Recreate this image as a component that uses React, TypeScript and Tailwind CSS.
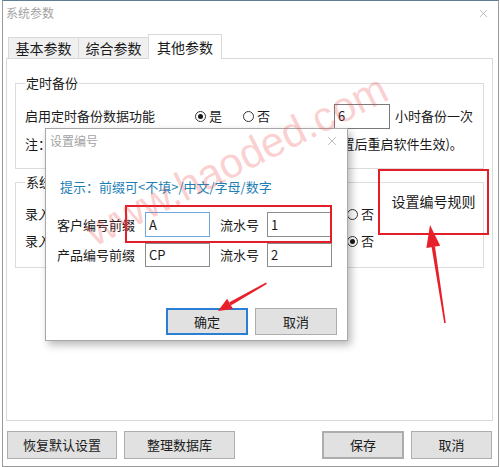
import { X } from "lucide-react";

function Radio({ checked, label }: { checked?: boolean; label: string }) {
  return (
    <span className="flex items-center gap-[3px]">
      <span className="flex h-[11px] w-[11px] items-center justify-center rounded-full border border-[#333] bg-white">
        {checked && <span className="h-[5px] w-[5px] rounded-full bg-[#1a1a1a]" />}
      </span>
      <span>{label}</span>
    </span>
  );
}

function Btn({ label, className = "" }: { label: string; className?: string }) {
  return (
    <div
      className={`flex h-[28px] items-center justify-center border border-[#adadad] bg-[#e1e1e1] text-[13px] ${className}`}
    >
      {label}
    </div>
  );
}

function Tab({ label, active }: { label: string; active?: boolean }) {
  return (
    <div
      className={
        active
          ? "relative z-10 -mb-px -ml-px flex h-[25px] w-[74px] items-center justify-center border border-b-0 border-[#d9d9d9] bg-white text-[14px]"
          : "-ml-px flex h-[21px] w-[71px] items-center justify-center border border-b-0 border-[#d9d9d9] bg-[#f0f0f0] text-[14px] first:ml-0"
      }
    >
      {label}
    </div>
  );
}

export default function App() {
  return (
    <div className="relative h-[467px] w-[500px] overflow-hidden bg-white font-['Noto_Sans_CJK_SC','Noto_Sans',sans-serif] text-[13px] text-[#1a1a1a]">
      <div className="ml-[2px] flex h-[467px] w-[497px] flex-col border border-[#9a9a9a] border-t-[#5d7f94] bg-white">
        {/* title bar */}
        <div className="flex h-[24px] items-center justify-between pl-[3px] pr-[8px]">
          <span className="text-[12px] text-[#a3a3a3]">系统参数</span>
          <X size={13} strokeWidth={1} className="text-[#8a8a8a]" />
        </div>

        {/* tabs */}
        <div className="flex h-[33px] items-end pl-[5px]">
          <Tab label="基本参数" />
          <Tab label="综合参数" />
          <Tab label="其他参数" active />
        </div>

        {/* panel */}
        <div className="relative ml-[3px] h-[363px] w-[487px] border border-[#d9d9d9] bg-white">
          {/* group 1 */}
          <div className="ml-[8px] mt-[24px] h-[86px] w-[469px] border border-[#dcdcdc] pl-[9px]">
            <div className="-mt-[10px] w-fit bg-white px-px leading-[18px]">定时备份</div>
            <div className="mt-[11px] flex h-[26px] items-center">
              <span className="w-[170px]">启用定时备份数据功能</span>
              <Radio checked label="是" />
              <span className="ml-[21px]">
                <Radio label="否" />
              </span>
              <div className="ml-[64px] flex h-[25px] w-[56px] items-center border border-[#7a7a7a] pl-[3px]">6</div>
              <span className="ml-[5px]">小时备份一次</span>
            </div>
            <div className="mt-[5px] flex h-[20px] items-center whitespace-nowrap">
              注：启用后系统将按照设定的时间自动备份数据(修改设置后重启软件生效)。
            </div>
          </div>

          {/* group 2 */}
          <div className="ml-[8px] mt-[13px] h-[86px] w-[469px] border border-[#dcdcdc] pl-[9px]">
            <div className="-mt-[10px] w-fit bg-white px-px leading-[18px]">系统设置</div>
            <div className="mt-[13px] flex h-[20px] items-center">
              <span className="w-[273px]">录入客户资料时编号自动生成</span>
              <Radio checked label="是" />
              <span className="ml-[22px]">
                <Radio label="否" />
              </span>
            </div>
            <div className="mt-[7px] flex h-[20px] items-center">
              <span className="w-[273px]">录入产品资料时编号自动生成</span>
              <Radio label="是" />
              <span className="ml-[22px]">
                <Radio checked label="否" />
              </span>
            </div>
          </div>
        </div>

        {/* bottom buttons */}
        <div className="mt-[10px] flex items-center pl-[4px]">
          <Btn label="恢复默认设置" className="w-[110px]" />
          <Btn label="整理数据库" className="ml-[7px] w-[111px]" />
          <Btn label="保存" className="ml-[87px] w-[82px] border-2 border-[#2a7fd4]" />
          <Btn label="取消" className="ml-[7px] w-[81px]" />
        </div>
      </div>

      {/* link button + annotation box */}
      <div className="absolute left-[378px] top-[169px] flex h-[66px] w-[111px] items-center justify-center border-2 border-[#e31e27] pb-[2px] text-[14px]">
        设置编号规则
      </div>

      {/* dialog */}
      <div className="absolute left-[45px] top-[128px] flex h-[213px] w-[303px] flex-col border border-[#a8a8a8] bg-white shadow-[3px_4px_8px_rgba(0,0,0,0.28)]">
        <div className="flex h-[24px] items-center justify-between pl-[4px] pr-[8px]">
          <span className="text-[12px] text-[#a3a3a3]">设置编号</span>
          <X size={14} strokeWidth={1} className="text-[#8a8a8a]" />
        </div>
        <div className="ml-[14px] mt-[25px] leading-[18px] text-[#1f7fb5]">提示：前缀可&lt;不填&gt;/中文/字母/数字</div>
        <div className="ml-[11px] mt-[16px] flex items-center">
          <span className="w-[88px]">客户编号前缀</span>
          <div className="flex h-[25px] w-[65px] items-center border border-[#6fa6dd] pl-[3px]">A</div>
          <span className="ml-[10px] w-[47px]">流水号</span>
          <div className="flex h-[25px] w-[65px] items-center border border-[#8c8c8c] pl-[3px]">1</div>
        </div>
        <div className="ml-[11px] mt-[6px] flex items-center">
          <span className="w-[88px]">产品编号前缀</span>
          <div className="flex h-[24px] w-[65px] items-center border border-[#8c8c8c] pl-[3px]">CP</div>
          <span className="ml-[10px] w-[47px]">流水号</span>
          <div className="flex h-[24px] w-[65px] items-center border border-[#8c8c8c] pl-[3px]">2</div>
        </div>
        <div className="ml-[120px] mt-[41px] flex">
          <div className="flex h-[27px] w-[82px] items-center justify-center border-2 border-[#2a7fd4] bg-[#e1e1e1]">确定</div>
          <div className="ml-[7px] flex h-[27px] w-[82px] items-center justify-center border border-[#adadad] bg-[#e1e1e1]">取消</div>
        </div>
      </div>

      {/* annotation box in dialog */}
      <div className="pointer-events-none absolute left-[125px] top-[205px] h-[38px] w-[207px] border-2 border-[#e31e27]" />

      {/* arrows */}
      <svg className="pointer-events-none absolute left-0 top-0" width={500} height={467} viewBox="0 0 500 467">
        <polygon points="266,282.5 266.8,284 230.8,305.5 229.4,302.3" fill="#e8202a" />
        <polygon points="218,311 227.1,298.7 233.1,309.1" fill="#e8202a" />
        <polygon points="444.2,323 445.8,323 435,246.5 431.6,247" fill="#e8202a" />
        <polygon points="430,225 426.4,247.9 440.2,245.7" fill="#e8202a" />
      </svg>

      {/* watermark */}
      <div className="pointer-events-none absolute left-[94px] top-[212px] origin-[0_34px] -rotate-[26.5deg] whitespace-nowrap font-['Liberation_Sans',sans-serif] text-[42px] leading-none text-[rgba(235,70,70,0.26)]">
        www.haoded.com
      </div>
    </div>
  );
}
